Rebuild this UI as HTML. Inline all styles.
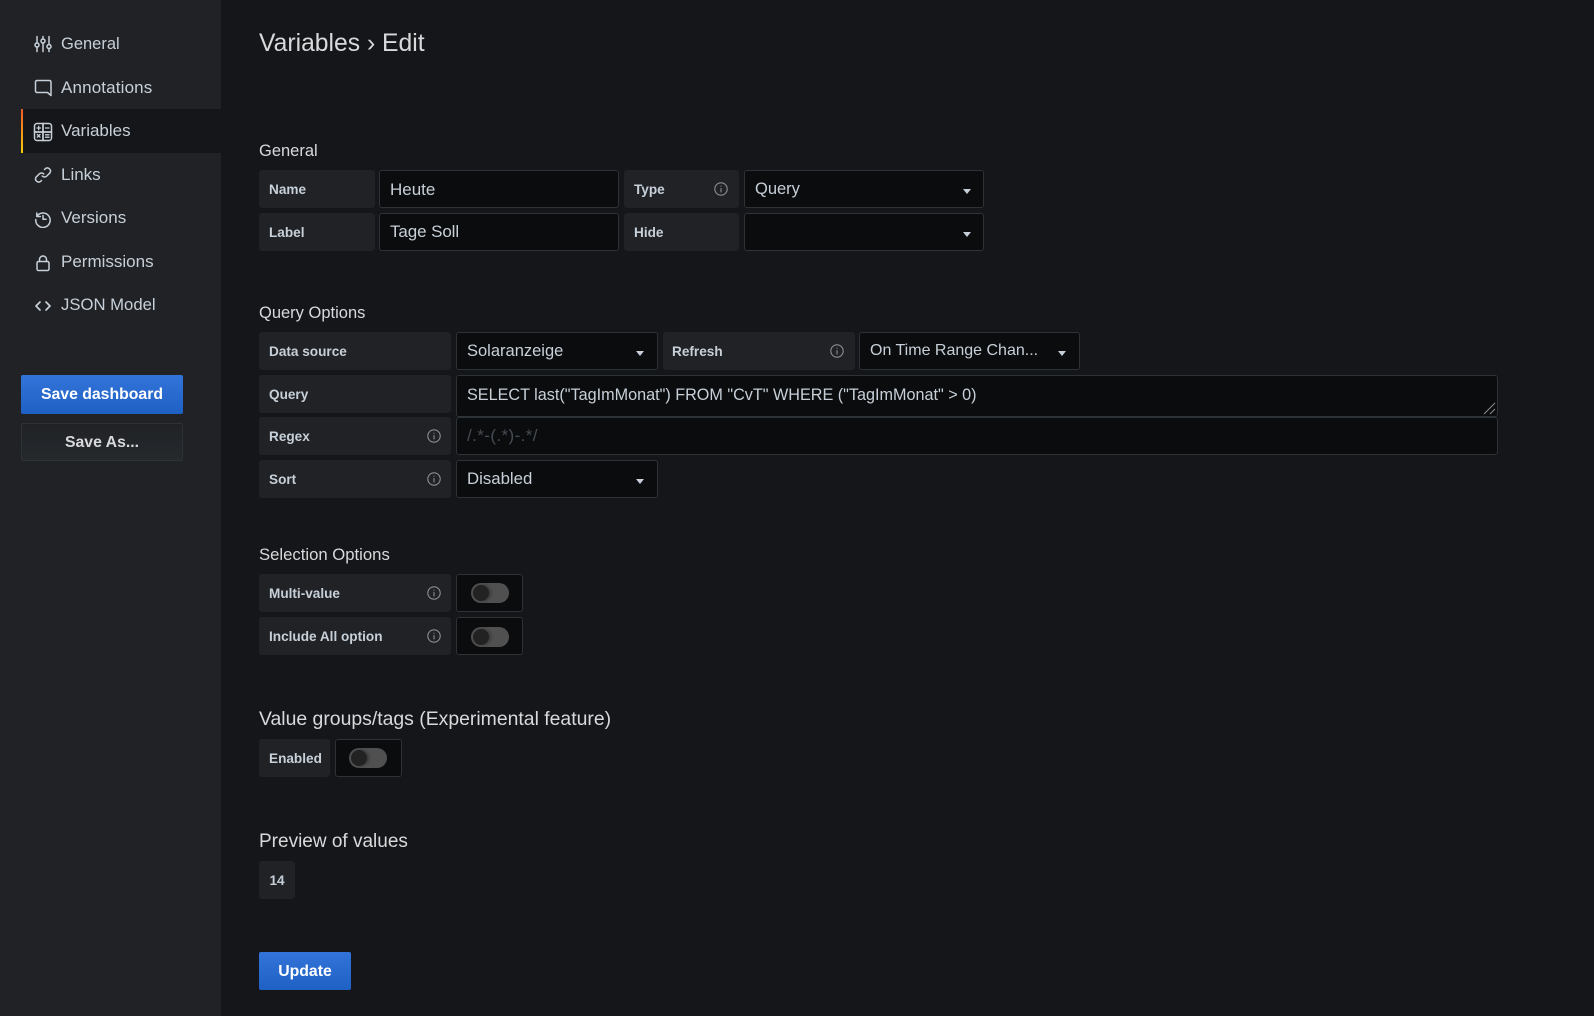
<!DOCTYPE html>
<html><head><meta charset="utf-8"><title>Variables</title>
<style>
html,body{margin:0;padding:0;background:#141619;width:1594px;height:1016px;overflow:hidden}
body{position:relative;font-family:"Liberation Sans",Arial,sans-serif;color:#c7d0d9}
div,svg{position:absolute;box-sizing:border-box}
.t{height:20px;line-height:20px;white-space:nowrap}
.side{background:#202226;left:0;top:0;width:221px;height:1016px}
.nav{font-size:17px;color:#c7d0d9;left:61px}
.h{color:#d8d9da;font-size:16.5px;left:259px}
.l{background:#202226;border-radius:3px;height:38px}
.lt{font-weight:bold;font-size:13.6px;color:#c7d0d9;margin-top:1px}
.i{background:#0b0c0e;border:1px solid #2c3235;border-radius:3px;height:38px}
.v{font-size:16.5px;color:#c7d0d9}
.c{width:0;height:0;border-left:4.5px solid transparent;border-right:4.5px solid transparent;border-top:5px solid #c7d0d9}
.sw{width:38px;height:20px;border-radius:10px;background:#505050}
.kn{left:2px;top:2px;width:16px;height:16px;border-radius:50%;background:#222;box-shadow:2px 0 3px rgba(0,0,0,.3)}
.b{border-radius:2px;text-align:center;font-weight:bold;color:#fff;font-size:15.8px;background:linear-gradient(#3274d9,#1f60c4)}
svg{fill:none;stroke:#c7d0d9;stroke-width:1.5;stroke-linecap:round;stroke-linejoin:round}
svg.inf{width:14px;height:14px;stroke:#8e8e8e;stroke-width:1.1}
</style></head><body>
<div class="side"></div>
<div style="left:21px;top:109px;width:200px;height:44px;background:#141619"></div>
<div style="left:21px;top:109px;width:2px;height:44px;background:linear-gradient(#f05a28,#fbca0a)"></div>

<svg style="left:34px;top:35px" width="18" height="18" viewBox="0 0 18 18"><path d="M3 1.500V8M3 12v4.500M9 1.500V4M9 8v8.500M15 1.500V9.500M15 13.500v3"/><circle cx="3" cy="10" r="2"/><circle cx="9" cy="6" r="2"/><circle cx="15" cy="11.500" r="2"/></svg>
<div class="t nav" style="top:34px;font-size:16.500px">General</div>
<svg style="left:34px;top:79px" width="18" height="18" viewBox="0 0 18 18"><path d="M3 1.500H15.500A1.500 1.500 0 0 1 17 3V16.500L13.500 13.500H3A1.500 1.500 0 0 1 1.500 12V3A1.500 1.500 0 0 1 3 1.500Z"/></svg>
<div class="t nav" style="top:78px;letter-spacing:.15px">Annotations</div>
<svg style="left:33px;top:122px" width="20" height="20" viewBox="0 0 20 20"><rect x="1.500" y="1.500" width="17" height="17" rx="2.500"/><path d="M1.500 10H18.500M10 1.500V18.500" stroke-width="1.700"/><path d="M4 6H7.500M5.700 4.300V7.700M12.500 6H16M4.300 12.500L7 15.200M7 12.500L4.300 15.200M12.500 12.800H16M12.500 15.200H16" stroke-width="1.300"/></svg>
<div class="t nav" style="top:121px">Variables</div>
<svg style="left:34px;top:166px" width="18" height="18" viewBox="0 0 18 18"><path d="M10.500 3.500L11.800 2.300A3.200 3.200 0 0 1 16 6.800L12.800 10A3.200 3.200 0 0 1 8.200 10M7.500 14.500L6.200 15.700A3.200 3.200 0 0 1 2 11.200L5.200 8A3.200 3.200 0 0 1 9.800 8"/></svg>
<div class="t nav" style="top:165px">Links</div>
<svg style="left:34px;top:210px" width="18" height="18" viewBox="0 0 18 18"><path d="M2.800 3V6.500H6.300M2.800 6.500A7.200 7.200 0 1 1 1.800 9.500M9 5.500V9.300H12"/></svg>
<div class="t nav" style="top:208px">Versions</div>
<svg style="left:34px;top:254px" width="18" height="18" viewBox="0 0 18 18"><rect x="3" y="7.500" width="12" height="9" rx="1.500"/><path d="M5.500 7.500V5.500A3.500 3.500 0 0 1 12.500 5.500V7.500"/></svg>
<div class="t nav" style="top:252px">Permissions</div>
<svg style="left:34px;top:297px" width="18" height="18" viewBox="0 0 18 18"><path d="M6 5L2 9L6 13M12 5L16 9L12 13" stroke-width="1.700"/></svg>
<div class="t nav" style="top:295px;font-size:16.700px">JSON Model</div>

<div class="b t" style="left:21px;top:375px;width:162px;height:39px;line-height:39px">Save dashboard</div>
<div class="t" style="left:21px;top:423px;width:162px;height:38px;line-height:38px;border:1px solid #2c3235;border-radius:2px;background:linear-gradient(#202226,#25292c);text-align:center;font-weight:bold;font-size:15.8px;color:#d8d9da">Save As...</div>

<div class="t" style="left:259px;top:29px;height:30px;line-height:30px;font-size:24.700px;color:#d8d9da">Variables › Edit</div>

<div class="t h" style="top:141px">General</div>
<div class="l" style="left:259px;top:170px;width:116px"></div><div class="t lt" style="left:269px;top:179px">Name</div>
<div class="i" style="left:379px;top:170px;width:240px"></div><div class="t v" style="left:390px;top:180px;font-size:17px">Heute</div>
<div class="l" style="left:624px;top:170px;width:115px"></div><div class="t lt" style="left:634px;top:179px">Type</div>
<svg class="inf" style="left:714px;top:182px" viewBox="0 0 14 14"><circle cx="7" cy="7" r="6.200"/><path d="M7 6.500V10M7 4.200V4.300"/></svg>
<div class="i" style="left:744px;top:170px;width:240px"></div><div class="t v" style="left:755px;top:179px">Query</div><div class="c" style="left:963px;top:189px"></div>

<div class="l" style="left:259px;top:213px;width:116px"></div><div class="t lt" style="left:269px;top:222px">Label</div>
<div class="i" style="left:379px;top:213px;width:240px"></div><div class="t v" style="left:390px;top:222px;font-size:17px;letter-spacing:-.1px">Tage Soll</div>
<div class="l" style="left:624px;top:213px;width:115px"></div><div class="t lt" style="left:634px;top:222px">Hide</div>
<div class="i" style="left:744px;top:213px;width:240px"></div><div class="c" style="left:963px;top:232px"></div>

<div class="t h" style="top:303px">Query Options</div>
<div class="l" style="left:259px;top:332px;width:192px"></div><div class="t lt" style="left:269px;top:341px">Data source</div>
<div class="i" style="left:456px;top:332px;width:202px"></div><div class="t v" style="left:467px;top:341px">Solaranzeige</div><div class="c" style="left:636px;top:351px"></div>
<div class="l" style="left:663px;top:332px;width:192px"></div><div class="t lt" style="left:672px;top:341px">Refresh</div>
<svg class="inf" style="left:830px;top:344px" viewBox="0 0 14 14"><circle cx="7" cy="7" r="6.200"/><path d="M7 6.500V10M7 4.200V4.300"/></svg>
<div class="i" style="left:859px;top:332px;width:221px"></div><div class="t v" style="left:870px;top:341px;font-size:16px">On Time Range Chan...</div><div class="c" style="left:1058px;top:351px"></div>

<div class="l" style="left:259px;top:375px;width:192px"></div><div class="t lt" style="left:269px;top:384px">Query</div>
<div class="i" style="left:456px;top:375px;width:1042px;height:42px"></div><div class="t v" style="left:467px;top:385px;font-size:16.200px">SELECT last("TagImMonat") FROM "CvT" WHERE ("TagImMonat" &gt; 0)</div>
<svg style="left:1483px;top:402px;stroke:#8e8e8e;stroke-width:1;stroke-linecap:butt" width="13" height="13" viewBox="0 0 13 13"><path d="M1 12L12 1M7 12L12 7"/></svg>

<div class="l" style="left:259px;top:417px;width:192px"></div><div class="t lt" style="left:269px;top:426px">Regex</div>
<svg class="inf" style="left:427px;top:429px" viewBox="0 0 14 14"><circle cx="7" cy="7" r="6.200"/><path d="M7 6.500V10M7 4.200V4.300"/></svg>
<div class="i" style="left:456px;top:417px;width:1042px"></div><div class="t" style="left:467px;top:426px;font-size:17px;letter-spacing:.4px;color:#464c54">/.*-(.*)-.*/</div>

<div class="l" style="left:259px;top:460px;width:192px"></div><div class="t lt" style="left:269px;top:469px">Sort</div>
<svg class="inf" style="left:427px;top:472px" viewBox="0 0 14 14"><circle cx="7" cy="7" r="6.200"/><path d="M7 6.500V10M7 4.200V4.300"/></svg>
<div class="i" style="left:456px;top:460px;width:202px"></div><div class="t v" style="left:467px;top:469px;font-size:16.800px">Disabled</div><div class="c" style="left:636px;top:479px"></div>

<div class="t h" style="top:545px;font-size:16.700px">Selection Options</div>
<div class="l" style="left:259px;top:574px;width:192px"></div><div class="t lt" style="left:269px;top:583px">Multi-value</div>
<svg class="inf" style="left:427px;top:586px" viewBox="0 0 14 14"><circle cx="7" cy="7" r="6.200"/><path d="M7 6.500V10M7 4.200V4.300"/></svg>
<div class="i" style="left:456px;top:574px;width:67px"></div><div class="sw" style="left:471px;top:583px"><div class="kn"></div></div>
<div class="l" style="left:259px;top:617px;width:192px"></div><div class="t lt" style="left:269px;top:626px">Include All option</div>
<svg class="inf" style="left:427px;top:629px" viewBox="0 0 14 14"><circle cx="7" cy="7" r="6.200"/><path d="M7 6.500V10M7 4.200V4.300"/></svg>
<div class="i" style="left:456px;top:617px;width:67px"></div><div class="sw" style="left:471px;top:626.500px"><div class="kn"></div></div>

<div class="t h" style="top:709px;font-size:19.400px">Value groups/tags (Experimental feature)</div>
<div class="l" style="left:259px;top:739px;width:71px"></div><div class="t lt" style="left:269px;top:748px">Enabled</div>
<div class="i" style="left:335px;top:739px;width:67px"></div><div class="sw" style="left:349px;top:748px"><div class="kn"></div></div>

<div class="t h" style="top:832px;font-size:19px">Preview of values</div>
<div class="l" style="left:259px;top:861px;width:36px"></div><div class="t lt" style="left:259px;top:870px;width:36px;text-align:center">14</div>

<div class="b t" style="left:259px;top:952px;width:92px;height:38px;line-height:39px">Update</div>
</body></html>
